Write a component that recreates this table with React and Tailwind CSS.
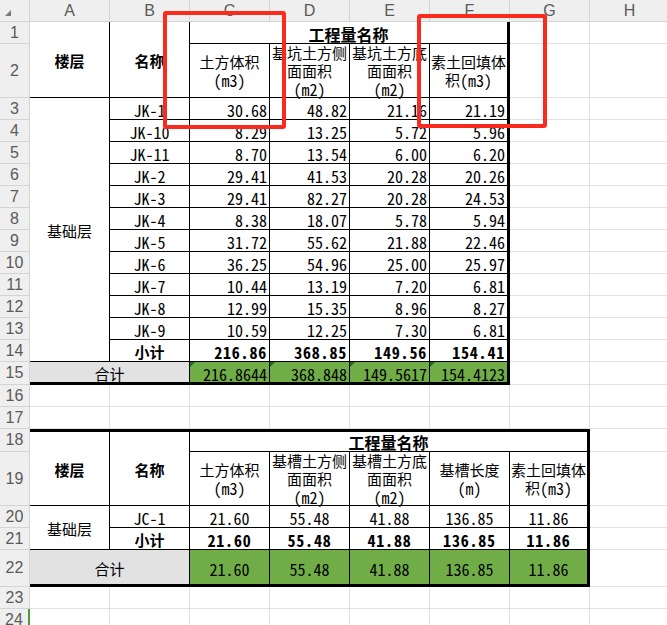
import React from "react";

const HDR =
  "bg-[#efefef] border-r border-b border-[#d4d4d4] flex items-center justify-center text-[#5a5a5a] text-[16px] font-['Liberation_Sans',sans-serif]";
const EMP = "border-r border-b border-[#e1e1e1]";
const CJK = "font-['Noto_Sans_CJK_SC',sans-serif] text-[15px] leading-[18px]";
const CJKB = "font-['Noto_Sans_CJK_SC',sans-serif] text-[15px] leading-[18px] font-bold";
const CJKT = "font-['Noto_Sans_CJK_SC',sans-serif] text-[16px] leading-[18px] font-bold";
const NUM = "font-['Noto_Sans_Mono_CJK_SC','Liberation_Mono',monospace] text-[16px] leading-[18px]";
const NUMB =
  "font-['Noto_Sans_Mono_CJK_SC','Liberation_Mono',monospace] text-[16px] leading-[18px] font-bold tracking-[0.8px]";

const B_RB = "border-r border-b border-black";
const B_RTB = "border-r-[3px] border-b border-black";
const B_R_BT = "border-r border-b-[3px] border-black";
const B_RT_BT = "border-r-[3px] border-b-[3px] border-black";
const B_T_RB = "border-t-[3px] border-r border-b border-black";
const B_T_RTB = "border-t-[3px] border-r-[3px] border-b border-black";

function H({ children }) {
  return <div className={HDR}>{children}</div>;
}
function E() {
  return <div className={EMP} />;
}
function Corner() {
  return (
    <div className="bg-[#efefef] border-r border-b border-[#d4d4d4] relative">
      <svg className="absolute left-[4px] top-[9px]" width="8" height="8" viewBox="0 0 8 8">
        <polygon points="7,1 7,7 1,7" fill="#7a7a7a" />
      </svg>
    </div>
  );
}

function Tri() {
  return (
    <svg className="absolute left-0 top-0" width="5" height="5" viewBox="0 0 5 5">
      <polygon points="0,0 5,0 0,5" fill="#1e6a2a" />
    </svg>
  );
}

function L({ children }) {
  return <div className="h-[18px] overflow-visible flex items-center justify-center whitespace-nowrap">{children}</div>;
}

function Hdr2({ a, b, c, last }) {
  return (
    <div className={(last ? B_RTB : B_RB) + " flex flex-col items-center justify-center pt-[1px]"}>
      {a && <L>{a}</L>}
      {b && <L>{b}</L>}
      {c && <L>{c}</L>}
    </div>
  );
}

const t1 = [
  ["JK-1", "30.68", "48.82", "21.16", "21.19"],
  ["JK-10", "8.29", "13.25", "5.72", "5.96"],
  ["JK-11", "8.70", "13.54", "6.00", "6.20"],
  ["JK-2", "29.41", "41.53", "20.28", "20.26"],
  ["JK-3", "29.41", "82.27", "20.28", "24.53"],
  ["JK-4", "8.38", "18.07", "5.78", "5.94"],
  ["JK-5", "31.72", "55.62", "21.88", "22.46"],
  ["JK-6", "36.25", "54.96", "25.00", "25.97"],
  ["JK-7", "10.44", "13.19", "7.20", "6.81"],
  ["JK-8", "12.99", "15.35", "8.96", "8.27"],
  ["JK-9", "10.59", "12.25", "7.30", "6.81"],
];

function N1({ v, bold, last }) {
  return (
    <div className={(last ? B_RTB : B_RB) + " flex items-center justify-end pr-[2px] pt-[3px]"}>
      <span className={bold ? NUMB : NUM}>{v}</span>
    </div>
  );
}

function N2({ v, bold, last }) {
  return (
    <div className={(last ? B_RTB : B_RB) + " flex items-center justify-center pt-[3px]"}>
      <span className={bold ? NUMB : NUM}>{v}</span>
    </div>
  );
}

function G1({ v, last }) {
  return (
    <div className={(last ? B_RT_BT : B_R_BT) + " relative bg-[#70ad47] flex items-center justify-end pr-[2px] pt-[3px]"}>
      <Tri />
      <span className={NUM}>{v}</span>
    </div>
  );
}

function G2({ v, last }) {
  return (
    <div className={(last ? B_RT_BT : B_R_BT) + " bg-[#70ad47] flex items-center justify-center pt-[4px]"}>
      <span className={NUM}>{v}</span>
    </div>
  );
}

function EmptyRow({ n }) {
  return (
    <>
      <H>{n}</H>
      <E />
      <E />
      <E />
      <E />
      <E />
      <E />
      <E />
      <E />
    </>
  );
}

export default function App() {
  return (
    <div className="relative w-[667px] h-[625px] overflow-hidden bg-white">
      <div className="grid grid-cols-[30px_repeat(7,80px)_80px] grid-rows-[22px_22px_54px_repeat(12,22px)_23px_22px_22px_23px_54px_22px_22px_37px_22px_22px]">
        {/* column headers */}
        <Corner />
        {["A", "B", "C", "D", "E", "F", "G", "H"].map((c) => (
          <H key={c}>{c}</H>
        ))}

        {/* row 1 */}
        <H>1</H>
        <div className={B_RB + " row-span-2 flex items-center justify-center pt-[2px]"}>
          <span className={CJKB}>楼层</span>
        </div>
        <div className={B_RB + " row-span-2 flex items-center justify-center pt-[2px]"}>
          <span className={CJKB}>名称</span>
        </div>
        <div className={B_RTB + " col-span-4 flex items-center justify-center pt-[2px]"}>
          <span className={CJKT}>工程量名称</span>
        </div>
        <E />
        <E />

        {/* row 2 */}
        <H>2</H>
        <Hdr2 a={<span className={CJK}>土方体积</span>} b={<span className={NUM}>(m3)</span>} />
        <Hdr2
          a={<span className={CJK}>基坑土方侧</span>}
          b={<span className={CJK}>面面积</span>}
          c={<span className={NUM}>(m2)</span>}
        />
        <Hdr2
          a={<span className={CJK}>基坑土方底</span>}
          b={<span className={CJK}>面面积</span>}
          c={<span className={NUM}>(m2)</span>}
        />
        <Hdr2
          last
          a={<span className={CJK}>素土回填体</span>}
          b={
            <>
              <span className={CJK}>积</span>
              <span className={NUM}>(m3)</span>
            </>
          }
        />
        <E />
        <E />

        {/* rows 3-13 */}
        {t1.map((r, i) => (
          <React.Fragment key={r[0]}>
            <H>{i + 3}</H>
            {i === 0 && (
              <div className={B_RB + " row-span-12 flex items-center justify-center pt-[3px]"}>
                <span className={CJK}>基础层</span>
              </div>
            )}
            <div className={B_RB + " flex items-center justify-center pt-[3px]"}>
              <span className={NUM}>{r[0]}</span>
            </div>
            <N1 v={r[1]} />
            <N1 v={r[2]} />
            <N1 v={r[3]} />
            <N1 v={r[4]} last />
            <E />
            <E />
          </React.Fragment>
        ))}

        {/* row 14 */}
        <H>14</H>
        <div className={B_RB + " flex items-center justify-center pt-[3px]"}>
          <span className={CJKB}>小计</span>
        </div>
        <N1 v="216.86" bold />
        <N1 v="368.85" bold />
        <N1 v="149.56" bold />
        <N1 v="154.41" bold last />
        <E />
        <E />

        {/* row 15 */}
        <H>15</H>
        <div className={B_R_BT + " col-span-2 bg-[#e2e2e2] flex items-center justify-center pt-[3px]"}>
          <span className={CJK}>合计</span>
        </div>
        <G1 v="216.8644" />
        <G1 v="368.848" />
        <G1 v="149.5617" />
        <G1 v="154.4123" last />
        <E />
        <E />

        <EmptyRow n={16} />
        <EmptyRow n={17} />

        {/* row 18 */}
        <H>18</H>
        <div className={B_T_RB + " row-span-2 flex items-center justify-center pt-[3px]"}>
          <span className={CJKB}>楼层</span>
        </div>
        <div className={B_T_RB + " row-span-2 flex items-center justify-center pt-[3px]"}>
          <span className={CJKB}>名称</span>
        </div>
        <div className={B_T_RTB + " col-span-5 flex items-center justify-center"}>
          <span className={CJKT}>工程量名称</span>
        </div>
        <E />

        {/* row 19 */}
        <H>19</H>
        <Hdr2 a={<span className={CJK}>土方体积</span>} b={<span className={NUM}>(m3)</span>} />
        <Hdr2
          a={<span className={CJK}>基槽土方侧</span>}
          b={<span className={CJK}>面面积</span>}
          c={<span className={NUM}>(m2)</span>}
        />
        <Hdr2
          a={<span className={CJK}>基槽土方底</span>}
          b={<span className={CJK}>面面积</span>}
          c={<span className={NUM}>(m2)</span>}
        />
        <Hdr2 a={<span className={CJK}>基槽长度</span>} b={<span className={NUM}>(m)</span>} />
        <Hdr2
          last
          a={<span className={CJK}>素土回填体</span>}
          b={
            <>
              <span className={CJK}>积</span>
              <span className={NUM}>(m3)</span>
            </>
          }
        />
        <E />

        {/* row 20 */}
        <H>20</H>
        <div className={B_RB + " row-span-2 flex items-center justify-center pt-[2px]"}>
          <span className={CJK}>基础层</span>
        </div>
        <div className={B_RB + " flex items-center justify-center pt-[3px]"}>
          <span className={NUM}>JC-1</span>
        </div>
        <N2 v="21.60" />
        <N2 v="55.48" />
        <N2 v="41.88" />
        <N2 v="136.85" />
        <N2 v="11.86" last />
        <E />

        {/* row 21 */}
        <H>21</H>
        <div className={B_RB + " flex items-center justify-center pt-[3px]"}>
          <span className={CJKB}>小计</span>
        </div>
        <N2 v="21.60" bold />
        <N2 v="55.48" bold />
        <N2 v="41.88" bold />
        <N2 v="136.85" bold />
        <N2 v="11.86" bold last />
        <E />

        {/* row 22 */}
        <H>22</H>
        <div className={B_R_BT + " col-span-2 bg-[#e2e2e2] flex items-center justify-center pt-[4px]"}>
          <span className={CJK}>合计</span>
        </div>
        <G2 v="21.60" />
        <G2 v="55.48" />
        <G2 v="41.88" />
        <G2 v="136.85" />
        <G2 v="11.86" last />
        <E />

        <EmptyRow n={23} />

        {/* row 24 */}
        <div className="bg-[#efefef] border-r-2 border-r-[#4c9a3a] border-b border-b-[#d4d4d4] flex items-center justify-center text-[#5a5a5a] text-[16px] font-['Liberation_Sans',sans-serif]">
          24
        </div>
        <E />
        <E />
        <E />
        <E />
        <E />
        <E />
        <E />
        <E />
      </div>

      {/* red annotation boxes */}
      <div className="absolute left-[163px] top-[11px] w-[123px] h-[118px] border-[4px] border-[#fb2a1e] rounded-[3px] pointer-events-none" />
      <div className="absolute left-[417px] top-[14px] w-[130px] h-[114px] border-[4px] border-[#fb2a1e] rounded-[3px] pointer-events-none" />
    </div>
  );
}
